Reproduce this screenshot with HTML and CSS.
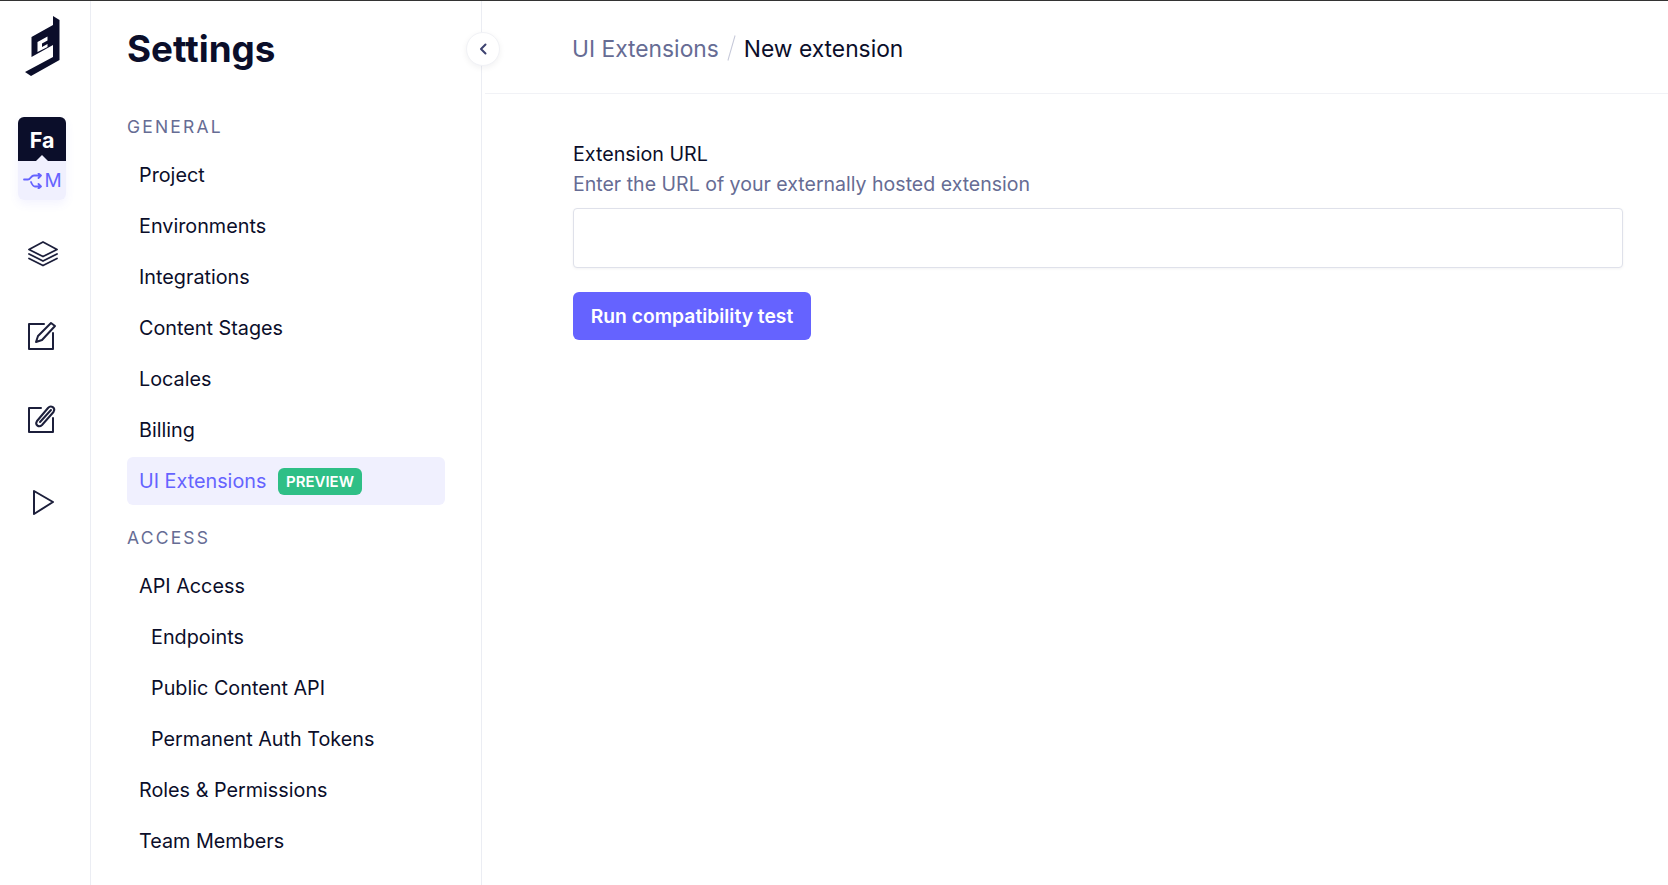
FILE: index.html
```html
<!DOCTYPE html>
<html lang="en">
<head>
    <meta charset="UTF-8">
    <meta name="viewport" content="width=device-width, initial-scale=1.0">
    <title>Settings</title>
    <link rel="stylesheet" href="styles.css">
</head>
<body>
    <div class="app">
        <nav class="rail">
            <svg class="logo" viewBox="0 0 36 60" width="36" height="60">
                <path fill="#0b0e2a" fill-rule="evenodd" d="M28 0 L34.500 4 V44 L6 60 L0 56 L28 41 V29 L6.500 41 V21 L28 9 Z M12.500 26 L22.500 20.500 V24.500 L17 27.500 V31 L22.500 28 V31 L12.500 36 Z"/>
            </svg>
            <div class="project">
                <div class="project-name">Fa</div>
                <div class="project-env">
                    <svg viewBox="0 0 20 16" width="20" height="16" fill="none" stroke="#6563ff" stroke-width="1.800" stroke-linecap="round" stroke-linejoin="round">
                        <path d="M1 6.500 H5 C7.500 6.500 8 2.500 11 2.500 H18 M15.500 0.500 L18 2.500 L15.500 5 M8 9 C9 11.500 10 13.500 12 13.500 H18 M15.500 11 L18 13.500 L15.500 15.500"/>
                    </svg>
                    <span>M</span>
                </div>
            </div>
            <svg class="rail-icon icon-layers" viewBox="0 0 32 28" width="32" height="28" fill="none" stroke="#1c1f3b" stroke-width="1.800" stroke-linejoin="round" stroke-linecap="round">
                <path d="M16 2 L30 9.500 L16 16.500 L2 9.500 Z"/>
                <path d="M2 14 L16 21 L30 14"/>
                <path d="M2 18.500 L16 25.500 L30 18.500"/>
            </svg>
            <svg class="rail-icon icon-edit" viewBox="0 0 30 30" width="30" height="30" fill="none" stroke="#1c1f3b" stroke-width="2" stroke-linejoin="round" stroke-linecap="round">
                <path d="M17 3 H2 V28 H26 V12"/>
                <path d="M9 21 L11 15 L24 2 L28 5 L15 19 Z"/>
            </svg>
            <svg class="rail-icon icon-clip" viewBox="0 0 30 30" width="30" height="30" fill="none" stroke="#1c1f3b" stroke-width="2" stroke-linejoin="round" stroke-linecap="round">
                <path d="M14 4 H2 V28 H26 V14"/>
                <path d="M10 17 L21 4 C24 0.500 29 4 26.500 8 L15 21 C12 24 7.500 21 10 17 Z"/>
                <path d="M13 18 L24 6"/>
            </svg>
            <svg class="rail-icon icon-play" viewBox="0 0 24 28" width="24" height="28" fill="none" stroke="#1c1f3b" stroke-width="2" stroke-linejoin="round">
                <path d="M3 3 L22 14 L3 26 Z"/>
            </svg>
        </nav>

        <aside class="sidebar">
            <h1 class="sidebar-title">Settings</h1>
            <div class="nav-heading">GENERAL</div>
            <a class="nav-item">Project</a>
            <a class="nav-item">Environments</a>
            <a class="nav-item">Integrations</a>
            <a class="nav-item">Content Stages</a>
            <a class="nav-item">Locales</a>
            <a class="nav-item">Billing</a>
            <a class="nav-item active">UI Extensions <span class="badge">PREVIEW</span></a>
            <div class="nav-heading access">ACCESS</div>
            <a class="nav-item">API Access</a>
            <a class="nav-item sub">Endpoints</a>
            <a class="nav-item sub">Public Content API</a>
            <a class="nav-item sub">Permanent Auth Tokens</a>
            <a class="nav-item">Roles &amp; Permissions</a>
            <a class="nav-item">Team Members</a>
            <button class="collapse" aria-label="Collapse">
                <svg viewBox="0 0 10 14" width="10" height="14" fill="none" stroke="#3d4270" stroke-width="2" stroke-linecap="round" stroke-linejoin="round">
                    <path d="M7.500 2.500 L3 7 L7.500 11.500"/>
                </svg>
            </button>
        </aside>

        <main class="main">
            <header class="topbar">
                <span class="crumb">UI Extensions</span>
                <span class="crumb-sep"></span>
                <span class="crumb-current">New extension</span>
            </header>
            <div class="content">
                <label class="field-label" for="url">Extension URL</label>
                <div class="field-hint">Enter the URL of your externally hosted extension</div>
                <input class="field-input" type="text" id="url">
                <button class="run-button">Run compatibility test</button>
            </div>
        </main>
    </div>
</body>
</html>
```

FILE: styles.css
```css
html, body {
    height: 100%;
}
body {
    margin: 0;
    overflow: hidden;
    background: #fff;
    color: #0b0e2a;
    font-family: Inter, 'Liberation Sans', sans-serif;
    font-size: 19.8px;
}
.app {
    display: flex;
    height: 885px;
    box-sizing: border-box;
    border-top: 1px solid #333;
}
.rail {
    flex: 0 0 91px;
    box-sizing: border-box;
    padding-right: 6px;
    display: flex;
    flex-direction: column;
    align-items: center;
    border-right: 1px solid #ebedf3;
}
.logo {
    margin-top: 15px;
    margin-left: 2px;
}
.project {
    position: relative;
    width: 48px;
    margin-top: 41px;
    border-radius: 6px;
    overflow: hidden;
    box-shadow: 0 4px 10px rgba(101, 99, 255, 0.08);
}
.project::before {
    content: "";
    position: absolute;
    top: 38px;
    left: 18px;
    border: 6px solid transparent;
    border-top: 0;
    border-bottom-color: #f0f0fe;
}
.project-name {
    height: 44px;
    background: #0b0e2a;
    color: #fff;
    font-weight: 700;
    font-size: 21.500px;
    line-height: 47px;
    text-align: center;
}
.project-env {
    height: 39px;
    display: flex;
    align-items: center;
    justify-content: center;
    background: #f0f0fe;
    color: #6563ff;
    font-size: 19px;
    font-weight: 400;
}
.project-env svg {
    margin-left: 1px;
    margin-right: 1px;
}
.rail-icon {
    display: block;
}
.icon-layers {
    margin-top: 40px;
    margin-left: 1px;
}
.icon-edit {
    margin-top: 53px;
    margin-left: -1px;
}
.icon-clip {
    margin-top: 53px;
    margin-left: -1px;
}
.icon-play {
    margin-top: 54px;
    margin-left: 2px;
}
.sidebar {
    position: relative;
    flex: 0 0 391px;
    box-sizing: border-box;
    padding: 0 36px 0 36px;
    border-right: 1px solid #ebedf3;
}
.sidebar-title {
    margin: 0;
    padding-top: 26px;
    height: 70px;
    font-size: 36.800px;
    line-height: 44px;
    font-weight: 700;
}
.nav-heading {
    margin-top: 16px;
    height: 27px;
    line-height: 27px;
    color: #666c94;
    font-size: 17.500px;
    font-weight: 400;
    letter-spacing: 2.200px;
}
.nav-heading.access {
    margin-top: 19px;
}
.nav-item {
    display: flex;
    align-items: center;
    height: 48px;
    margin-top: 3px;
    padding-left: 12px;
    border-radius: 6px;
    line-height: 48px;
    white-space: pre;
}
.nav-heading + .nav-item {
    margin-top: 11px;
}
.nav-item.sub {
    padding-left: 24px;
}
.nav-item.active {
    background: #f0f0fe;
    color: #6563ff;
}
.badge {
    margin-left: 6px;
    padding: 0 8px;
    height: 27px;
    line-height: 27px;
    border-radius: 6px;
    background: #2fbf86;
    color: #fff;
    font-size: 15px;
    font-weight: 600;
}
.collapse {
    position: absolute;
    top: 31px;
    right: -19px;
    width: 34px;
    height: 34px;
    display: flex;
    align-items: center;
    justify-content: center;
    padding: 0;
    border: 1px solid #f1f2f6;
    border-radius: 50%;
    background: #fff;
    box-shadow: 0 2px 6px rgba(11, 14, 42, 0.06);
}
.main {
    flex: 1;
    min-width: 0;
}
.topbar {
    display: flex;
    align-items: center;
    height: 93px;
    padding-top: 2px;
    box-sizing: border-box;
    margin-left: 3px;
    padding-left: 87px;
    border-bottom: 1px solid #f1f2f6;
    font-size: 22.800px;
}
.crumb {
    color: #666c94;
}
.crumb-sep {
    width: 1px;
    height: 26px;
    margin: 0 12px 0 12px;
    background: #c5c8d8;
    transform: rotate(16deg);
}
.content {
    padding: 45px 45px 0 91px;
}
.field-label {
    display: block;
    font-size: 19.700px;
    line-height: 30px;
}
.field-hint {
    color: #666c94;
    font-size: 19.550px;
    line-height: 30px;
}
.field-input {
    display: block;
    width: 100%;
    height: 60px;
    box-sizing: border-box;
    margin-top: 9px;
    border: 1px solid #dfe1ea;
    border-radius: 4px;
    box-shadow: 0 1px 3px rgba(11, 14, 42, 0.05);
}
.run-button {
    display: block;
    margin-top: 24px;
    height: 48px;
    width: 238px;
    padding: 0;
    border: 0;
    border-radius: 6px;
    background: #6563ff;
    color: #fff;
    font-family: inherit;
    font-size: 19.300px;
    font-weight: 600;
}
```
